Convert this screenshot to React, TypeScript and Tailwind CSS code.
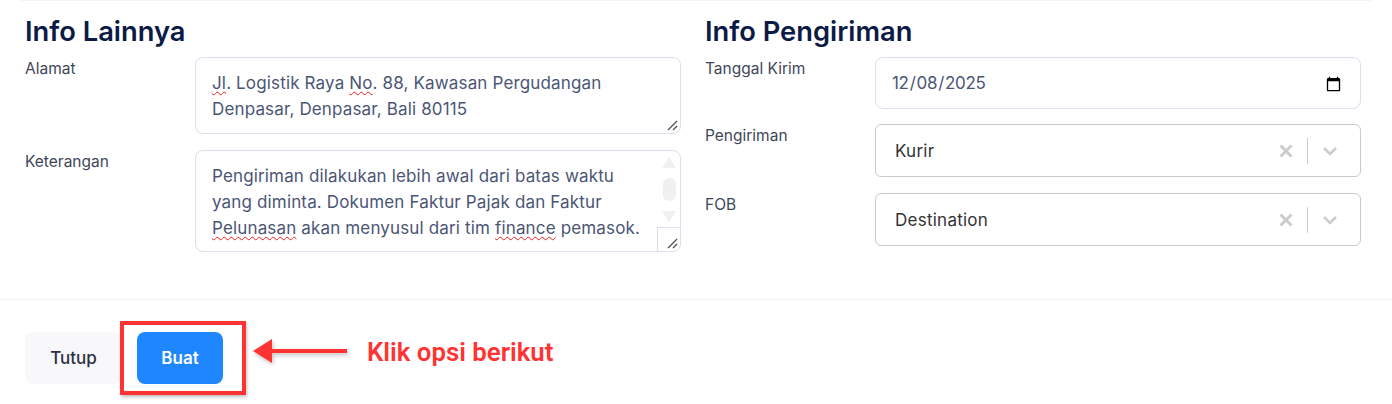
import { ReactNode } from "react";

const FONT = "font-['Inter',sans-serif]";

function Label({ children }: { children: ReactNode }) {
  return <div className="w-[170px] shrink-0 pt-[2px] text-[15.5px] leading-[20px] text-[#3f4658]">{children}</div>;
}

function Squiggle({ children }: { children: ReactNode }) {
  return <span className="underline decoration-wavy decoration-[#f01f1f] decoration-[1.25px] underline-offset-2">{children}</span>;
}

function Resizer() {
  return (
    <svg width="14" height="14" viewBox="0 0 14 14" className="absolute bottom-[1px] right-[1px]">
      <path d="M3 12 L12 3 M8 12 L12 8" stroke="#555" strokeWidth="1.4" fill="none" />
    </svg>
  );
}

function ClearableSelect({ value }: { value: string }) {
  return (
    <div className="flex h-[53px] flex-1 items-center rounded-[6px] border border-[#c9c9cf] bg-white pl-[19px] pr-[20px]">
      <span className="flex-1 pt-[2px] text-[17px] tracking-[0.25px] text-[#333333]">{value}</span>
      <svg width="14" height="14" viewBox="0 0 14 14" className="mr-[14px]">
        <path d="M1.5 1.5 L12.5 12.5 M12.5 1.5 L1.5 12.5" stroke="#cccccc" strokeWidth="3" fill="none" />
      </svg>
      <div className="h-[26px] w-px bg-[#cccccc]" />
      <svg width="16" height="10" viewBox="0 0 16 10" className="ml-[14px] mr-[2px]">
        <path d="M2 2 L8 8 L14 2" stroke="#cccccc" strokeWidth="2.6" fill="none" />
      </svg>
    </div>
  );
}

export default function App() {
  return (
    <div className={`${FONT} relative h-[404px] w-[1392px] overflow-hidden bg-white`}>
      <div className="mx-[20px] h-px bg-[#f3f4f6]" />
      <div className="flex h-[298px] gap-[24px] pl-[25px] pr-[31px] pt-[14px]">
        <section className="flex-1">
          <h2 className="mb-[8px] h-[34px] text-[27.3px] font-semibold leading-[34px] text-[#0b1b45]">Info Lainnya</h2>
          <div className="flex">
            <Label>Alamat</Label>
            <div className="relative h-[77px] flex-1 rounded-[8px] border border-[#dcdfec] px-[16px] py-[12px] text-[17px] leading-[26px] tracking-[0.15px] text-[#4b5675]">
              <Squiggle>Jl</Squiggle>. Logistik Raya <Squiggle>No</Squiggle>. 88, Kawasan Pergudangan
              <br />
              Denpasar, Denpasar, Bali 80115
              <Resizer />
            </div>
          </div>
          <div className="mt-[16px] flex">
            <Label>Keterangan</Label>
            <div className="relative h-[102px] flex-1 overflow-hidden rounded-[8px] border border-[#dcdfec] px-[16px] py-[12px] text-[17px] leading-[26px] tracking-[0.15px] text-[#4b5675]">
              Pengiriman dilakukan lebih awal dari batas waktu
              <br />
              yang diminta. Dokumen Faktur Pajak dan Faktur
              <br />
              <Squiggle>Pelunasan</Squiggle> akan menyusul dari tim <Squiggle>finance</Squiggle> pemasok.
              <div className="absolute right-[4px] top-[6px] flex w-[14px] flex-col items-center">
                <svg width="14" height="11" viewBox="0 0 14 11"><path d="M7 0 L14 11 L0 11 Z" fill="#f0f0f2" /></svg>
                <div className="mt-[10px] h-[23px] w-[13px] rounded-[6px] bg-[#f0f0f2]" />
                <svg width="14" height="11" viewBox="0 0 14 11" className="mt-[10px]"><path d="M0 0 L14 0 L7 11 Z" fill="#f0f0f2" /></svg>
              </div>
              <div className="absolute bottom-0 right-0 h-[24px] w-[23px] border-l border-t border-[#dcdfec] bg-white">
                <Resizer />
              </div>
            </div>
          </div>
        </section>
        <section className="flex-1">
          <h2 className="mb-[8px] h-[34px] text-[27.3px] font-semibold leading-[34px] text-[#0b1b45]">Info Pengiriman</h2>
          <div className="flex">
            <Label>Tanggal Kirim</Label>
            <input
              type="date"
              defaultValue="2025-12-08"
              className="h-[52px] flex-1 rounded-[8px] border border-[#dcdfec] pb-0 pl-[15px] pr-[16px] pt-[2px] text-[17px] tracking-[-0.3px] text-[#4b5675]"
            />
          </div>
          <div className="mt-[15px] flex">
            <Label>Pengiriman</Label>
            <ClearableSelect value="Kurir" />
          </div>
          <div className="mt-[16px] flex">
            <Label>FOB</Label>
            <ClearableSelect value="Destination" />
          </div>
        </section>
      </div>
      <div className="h-px bg-[#f0f1f4]" />
      <footer className="flex gap-[15px] pl-[25px] pt-[32px]">
        <button className="h-[52px] w-[97px] rounded-[8px] bg-[#f8f8fa] pt-[2px] text-[17px] font-medium text-[#2b3045]">Tutup</button>
        <button className="h-[52px] w-[86px] rounded-[8px] bg-[#1e86ff] pt-[2px] text-[17px] font-semibold text-white">Buat</button>
      </footer>

      {/* annotation on top of the screenshot */}
      <div className="absolute left-[120px] top-[321px] h-[74px] w-[126px] border-[4px] border-[#ff3333] shadow-[1px_2px_3px_rgba(0,0,0,0.25)]" />
      <svg width="100" height="30" viewBox="0 0 100 30" className="absolute left-[250px] top-[336px] drop-shadow-[1px_2px_2px_rgba(0,0,0,0.25)]">
        <path d="M3 15 L22 3 L22 13 L97 13 L97 17 L22 17 L22 27 Z" fill="#ff3333" />
      </svg>
      <div className="absolute left-[367px] top-[336px] font-['Roboto',sans-serif] text-[25.8px] font-semibold leading-[32px] text-[#ff3333]">
        Klik opsi berikut
      </div>
    </div>
  );
}
